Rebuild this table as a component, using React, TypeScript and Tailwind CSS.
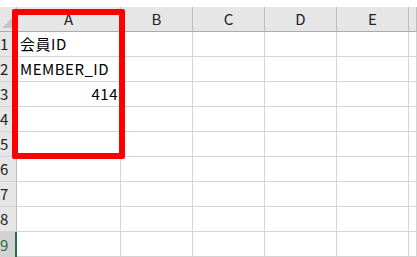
import React from "react";

const cols = ["A", "B", "C", "D", "E", ""];
const rows = [1, 2, 3, 4, 5, 6, 7, 8, 9];
const data: Record<number, { text: string; align: "left" | "right" }> = {
  1: { text: "会員ID", align: "left" },
  2: { text: "MEMBER_ID", align: "left" },
  3: { text: "414", align: "right" },
};

const font = { fontFamily: '"Noto Sans CJK JP", "Noto Sans", sans-serif' };

export default function App() {
  return (
    <div className="relative w-[417px] h-[257px] overflow-hidden bg-white" style={font}>
      <div className="h-[7px] bg-white" />
      <div className="grid grid-cols-[17px_104px_72px_72px_72px_72px_1fr] grid-rows-[25px_repeat(9,25px)]">
        {/* corner */}
        <div className="relative bg-[#e6e6e6] border-r border-b border-r-[#bdbdbd] border-b-[#ababab]">
          <svg className="absolute right-[2px] bottom-[3px]" width="12" height="12" viewBox="0 0 12 12">
            <polygon points="12,0 12,12 0,12" fill="#c4c4c4" />
          </svg>
        </div>
        {cols.map((c, i) => (
          <div
            key={"h" + i}
            className="bg-[#e6e6e6] border-r border-b border-r-[#bdbdbd] border-b-[#ababab] flex items-center justify-center pb-[1px] text-[15px] leading-none text-[#222]"
          >
            {c}
          </div>
        ))}
        {rows.map((r) => (
          <React.Fragment key={r}>
            <div
              className={
                r === 9
                  ? "bg-[#d2d2d2] border-r-2 border-r-[#217346] flex items-center pb-[1px] text-[15px] leading-none text-[#1e6b45]"
                  : "bg-[#e6e6e6] border-r border-b border-r-[#bdbdbd] border-b-[#d4d4d4] flex items-center pb-[1px] text-[15px] leading-none text-[#222]"
              }
            >
              {r}
            </div>
            {cols.map((_, ci) => {
              const d = ci === 0 ? data[r] : undefined;
              return (
                <div
                  key={ci}
                  className={
                    "border-r border-b border-[#d4d4d4] flex items-center pb-[2px] text-[15px] tracking-[0.5px] leading-none text-black whitespace-nowrap " +
                    (d && d.align === "right" ? "justify-end pr-[2px]" : "justify-start pl-[3px]")
                  }
                >
                  {d ? d.text : ""}
                </div>
              );
            })}
          </React.Fragment>
        ))}
      </div>
      {/* red annotation box */}
      <div className="absolute left-[12px] top-[9px] w-[113px] h-[150px] border-[6px] border-[#ff0000] rounded-[2px]" />
    </div>
  );
}
